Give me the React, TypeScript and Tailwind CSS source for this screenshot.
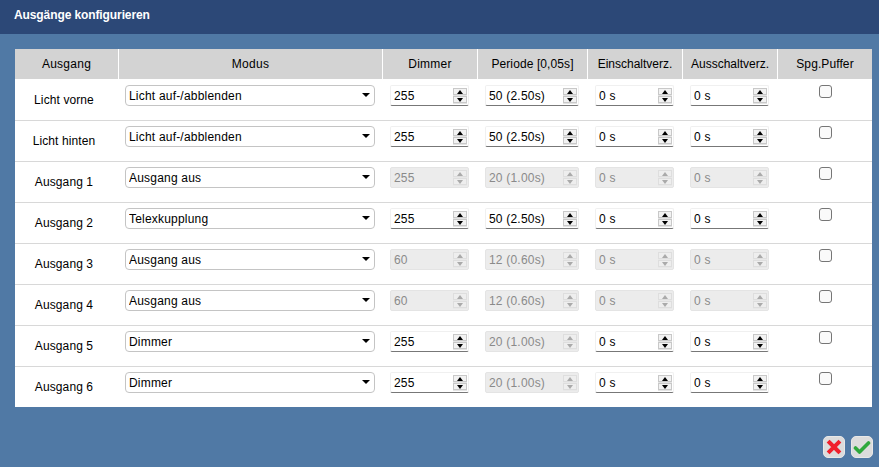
const rows = [
  { name: "Licht vorne", mode: "Licht auf-/abblenden", dim: "255", per: "50 (2.50s)", dimOff: false, perOff: false, delOff: false },
  { name: "Licht hinten", mode: "Licht auf-/abblenden", dim: "255", per: "50 (2.50s)", dimOff: false, perOff: false, delOff: false },
  { name: "Ausgang 1", mode: "Ausgang aus", dim: "255", per: "20 (1.00s)", dimOff: true, perOff: true, delOff: true },
  { name: "Ausgang 2", mode: "Telexkupplung", dim: "255", per: "50 (2.50s)", dimOff: false, perOff: false, delOff: false },
  { name: "Ausgang 3", mode: "Ausgang aus", dim: "60", per: "12 (0.60s)", dimOff: true, perOff: true, delOff: true },
  { name: "Ausgang 4", mode: "Ausgang aus", dim: "60", per: "12 (0.60s)", dimOff: true, perOff: true, delOff: true },
  { name: "Ausgang 5", mode: "Dimmer", dim: "255", per: "20 (1.00s)", dimOff: false, perOff: true, delOff: false },
  { name: "Ausgang 6", mode: "Dimmer", dim: "255", per: "20 (1.00s)", dimOff: false, perOff: true, delOff: false },
]

const headers = [
  { text: "Ausgang", cls: "tracking-[0.25px]" },
  { text: "Modus", cls: "tracking-[0.25px]" },
  { text: "Dimmer", cls: "tracking-[0.25px]" },
  { text: "Periode [0,05s]", cls: "tracking-[0.1px]" },
  { text: "Einschaltverz.", cls: "tracking-normal" },
  { text: "Ausschaltverz.", cls: "tracking-normal" },
  { text: "Spg.Puffer", cls: "tracking-[0.1px]" },
]
const gridCols = "grid grid-cols-[103px_263px_94px_109px_94px_94px_94px] gap-x-px"

function Spin({ value, off, width }: { value: string; off: boolean; width: string }) {
    const half = `flex items-center justify-center h-[7px] border ${off ? "border-[#dedede] bg-[#eee]" : "border-[#c8c8c8] bg-[#f2f2f2]"}`
    return <div className={`flex items-center justify-between h-[21px] ${width} pl-[3px] pr-[1px] rounded-[2px] ${off ? "bg-[#ececec] border border-[#e4e4e4] text-[#8a8a8a]" : "bg-white border-b-[1.5px] border-b-[#777] border-x border-x-[#f0f0f0] border-t border-t-[#f0f0f0] text-black"}`}>
        <input readOnly disabled={off} value={value} className="w-full min-w-0 bg-transparent outline-none text-[12px] leading-none tracking-[0.2px]" />
        <div className={`flex flex-col justify-center gap-[1px] shrink-0 w-[14px] h-[16px] ${off ? "bg-[#e8e8e8]" : "bg-[#e4e4e4]"}`}>
            <div className={half}><span className={`w-0 h-0 border-x-[3px] border-x-transparent border-b-[4px] ${off ? "border-b-[#aaa]" : "border-b-black"}`} /></div>
            <div className={half}><span className={`w-0 h-0 border-x-[3px] border-x-transparent border-t-[4px] ${off ? "border-t-[#aaa]" : "border-t-black"}`} /></div>
        </div>
    </div>
}

export default function App() {
    return <div className="flex flex-col w-[879px] h-[467px] bg-[#5079a5] text-[12px] text-black overflow-hidden" style={{ fontFamily: '"Liberation Sans", Arial, sans-serif' }}>
        <div className="flex items-center shrink-0 h-[34px] pl-[14px] pb-[4px] bg-[#2c4877] text-white font-bold text-[12px] tracking-[-0.1px]">Ausgänge konfigurieren</div>

        <div className="ml-[15px] mr-[7px] mt-[15px] bg-white">
            <div className={`${gridCols} h-[30px] mb-px`}>
                {headers.map(h => <div key={h.text} className={`flex items-center justify-center bg-[#d3d3d3] ${h.cls}`}>{h.text}</div>)}
            </div>
            {rows.map((r, i) => <div key={r.name} className={`${gridCols} ${i < rows.length - 1 ? "h-[41px] border-b border-b-[#d8d8d8]" : "h-[40px]"}`}>
                <div className="flex items-center justify-center pr-[5px] tracking-[0.1px]">{r.name}</div>
                <div className="pl-[6px] pt-[5px]">
                    <div className="relative w-[250px]">
                        <select value={r.mode} onChange={() => {}} className="appearance-none block w-full h-[21px] pl-[3px] bg-white border border-[#c4c4c4] rounded-[4px] outline-none text-[12px] tracking-[0.2px]">
                            <option>{r.mode}</option>
                        </select>
                        <span className="absolute right-[5px] top-[8px] w-0 h-0 border-x-[4px] border-x-transparent border-t-[4px] border-t-black" />
                    </div>
                </div>
                <div className="pl-[7px] pt-[5px]"><Spin value={r.dim} off={r.dimOff} width="w-[79px]" /></div>
                <div className="pl-[7px] pt-[5px]"><Spin value={r.per} off={r.perOff} width="w-[94px]" /></div>
                <div className="pl-[7px] pt-[5px]"><Spin value="0 s" off={r.delOff} width="w-[79px]" /></div>
                <div className="pl-[7px] pt-[5px]"><Spin value="0 s" off={r.delOff} width="w-[79px]" /></div>
                <div className="flex justify-center pt-[5px]">
                    <span className="w-[13px] h-[13px] bg-[#fafafa] border border-[#767676] rounded-[3px]" />
                </div>
            </div>)}
        </div>

        <div className="flex justify-end gap-[6px] mt-[29px] pr-[6px]">
            <button className="flex items-center justify-center w-[22px] h-[22px] rounded-[5px] border border-[#e8e8e8] bg-[#dcdcdc]">
                <svg width="16" height="16" viewBox="0 0 16 16"><path d="M3.5 3.5L12.5 12.5M12.5 3.5L3.5 12.5" stroke="#f0202c" strokeWidth="4" strokeLinecap="square" /></svg>
            </button>
            <button className="flex items-center justify-center w-[22px] h-[22px] rounded-[5px] border border-[#e8e8e8] bg-[#dcdcdc]">
                <svg width="18" height="16" viewBox="0 0 18 16"><path d="M2.5 9L6.5 13L15.5 4" fill="none" stroke="#2fa83c" strokeWidth="3.6" strokeLinecap="round" strokeLinejoin="round" /></svg>
            </button>
        </div>
    </div>
}
